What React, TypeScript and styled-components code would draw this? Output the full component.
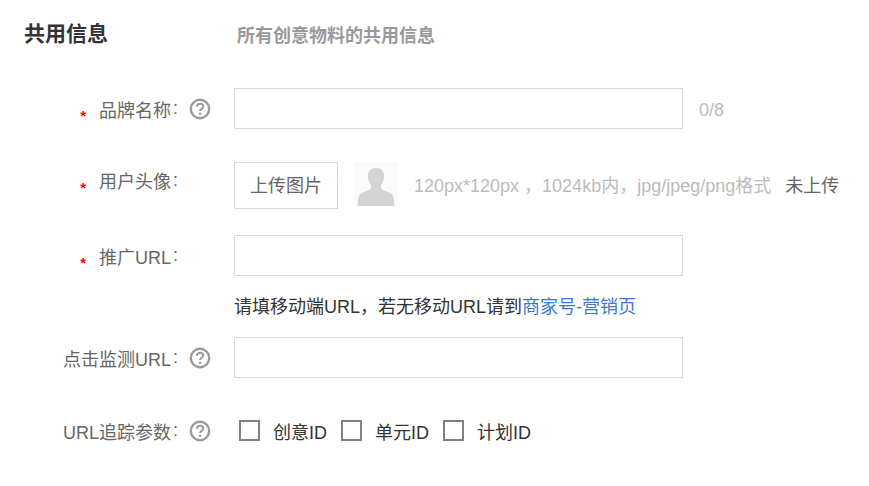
import * as React from 'react';
import styled, { createGlobalStyle } from 'styled-components';

const GlobalStyle = createGlobalStyle`
  html, body {
    margin: 0;
    padding: 0;
    background: #fff;
    font-family: "Liberation Sans", "Noto Sans CJK SC", sans-serif;
  }
`;

const Page = styled.div`
  width: 869px;
  height: 486px;
  overflow: hidden;
  box-sizing: border-box;
  padding-top: 20px;
`;

const Header = styled.div`
  display: flex;
  align-items: center;
  height: 28px;
  padding-left: 24px;
  margin-bottom: 40px;
`;

const Title = styled.h2`
  width: 213px;
  margin: 0;
  font-size: 21px;
  line-height: 28px;
  font-weight: 700;
  color: #333;
`;

const SubTitle = styled.span`
  font-size: 18px;
  font-weight: 700;
  color: #999;
`;

const Row = styled.div<{ $height: number; $gap: number }>`
  display: flex;
  align-items: center;
  height: ${(p) => p.$height}px;
  margin-bottom: ${(p) => p.$gap}px;
`;

const LabelCell = styled.div<{ $top?: boolean }>`
  display: flex;
  align-items: center;
  justify-content: flex-end;
  width: 178px;
  flex: none;
  font-size: 18px;
  color: #666;
  white-space: nowrap;
  ${(p) => (p.$top ? 'align-self: flex-start; margin-top: 5px;' : '')}
`;

const Colon = styled.span`
  margin-left: 2px;
`;

const Star = styled.i`
  font-style: normal;
  font-size: 15px;
  font-weight: 700;
  color: #f00;
  margin-right: 13px;
  position: relative;
  top: 7px;
`;

const HelpSlot = styled.div`
  width: 56px;
  flex: none;
  display: flex;
  align-items: center;
  padding-left: 11px;
  box-sizing: border-box;
`;

const Input = styled.input`
  width: 449px;
  height: 41px;
  box-sizing: border-box;
  border: 1px solid #d9d9d9;
  background: #fff;
  outline: none;
  padding: 0 10px;
  flex: none;
`;

const Counter = styled.span`
  margin-left: 16px;
  margin-top: 3px;
  font-size: 18px;
  color: #bbb;
`;

const UploadButton = styled.button`
  width: 104px;
  height: 47px;
  box-sizing: border-box;
  border: 1px solid #d9d9d9;
  background: #fff;
  font-family: inherit;
  font-size: 18px;
  color: #666;
  padding: 0 0 4px;
  flex: none;
`;

const Avatar = styled.div`
  width: 44px;
  height: 44px;
  margin-left: 16px;
  background: #fafafa;
  flex: none;
  align-self: flex-start;
`;

const Hint = styled.span`
  margin-left: 16px;
  margin-bottom: 4px;
  font-size: 18px;
  color: #bbb;
  white-space: pre;
`;

const Status = styled.span`
  margin-left: 14px;
  margin-bottom: 4px;
  font-size: 18px;
  color: #666;
`;

const HelperLine = styled.div`
  margin-left: 234px;
  height: 24px;
  line-height: 24px;
  margin-bottom: 18px;
  font-size: 18px;
  color: #333;
`;

const Link = styled.a`
  color: #3a78d0;
  text-decoration: none;
`;

const CheckGroup = styled.div`
  display: flex;
  align-items: center;
  padding-left: 5px;
`;

const CheckItem = styled.label`
  display: flex;
  align-items: center;
  font-size: 18px;
  color: #333;
  margin-right: 14px;
`;

const Box = styled.span`
  display: block;
  width: 21px;
  height: 21px;
  box-sizing: border-box;
  border: 2px solid #808080;
  background: #fff;
  margin-right: 13px;
`;

const HelpIcon = () => (
  <svg width="22" height="22" viewBox="0 0 22 22">
    <circle cx="11" cy="11" r="9.2" fill="none" stroke="#9a9a9a" strokeWidth="2.4" />
    <path d="M7.9 8.700c0-1.900 1.400-3 3.200-3 1.800 0 3.100 1.100 3.100 2.700 0 2.400-3.100 2.500-3.100 4.700" fill="none" stroke="#9a9a9a" strokeWidth="2" />
    <circle cx="11.100" cy="15.800" r="1.300" fill="#9a9a9a" />
  </svg>
);

const AvatarIcon = () => (
  <svg width="44" height="44" viewBox="0 0 44 44">
    <path
      d="M22 6c5 0 8 3 8 7.500 0 1 .5 1.500.2 3-.2 1-.8 1.200-1 2-.5 2-1.200 3.500-2.200 4.800v3.200c1 1.500 4 2.500 7 3.500 4.500 1.300 6 3.500 6.500 14H3.500c.5-10.500 2-12.700 6.500-14 3-1 6-2 7-3.500v-3.200c-1-1.300-1.700-2.800-2.200-4.800-.2-.8-.8-1-1-2-.3-1.500.2-2 .2-3C14 9 17 6 22 6z"
      fill="#d4d4d4"
    />
  </svg>
);

const App = () => (
  <Page>
    <GlobalStyle />
    <Header>
      <Title>共用信息</Title>
      <SubTitle>所有创意物料的共用信息</SubTitle>
    </Header>

    <Row $height={41} $gap={33}>
      <LabelCell><Star>*</Star>品牌名称<Colon>:</Colon></LabelCell>
      <HelpSlot><HelpIcon /></HelpSlot>
      <Input />
      <Counter>0/8</Counter>
    </Row>

    <Row $height={47} $gap={26}>
      <LabelCell $top><Star>*</Star>用户头像<Colon>:</Colon></LabelCell>
      <HelpSlot />
      <UploadButton>上传图片</UploadButton>
      <Avatar><AvatarIcon /></Avatar>
      <Hint>{'120px*120px \uFF0C1024kb内\uFF0Cjpg/jpeg/png格式'}</Hint>
      <Status>未上传</Status>
    </Row>

    <Row $height={41} $gap={19}>
      <LabelCell><Star>*</Star>推广URL<Colon>:</Colon></LabelCell>
      <HelpSlot />
      <Input />
    </Row>

    <HelperLine>{'请填移动端URL\uFF0C若无移动URL请到'}<Link href="#">商家号-营销页</Link></HelperLine>

    <Row $height={41} $gap={32}>
      <LabelCell>点击监测URL<Colon>:</Colon></LabelCell>
      <HelpSlot><HelpIcon /></HelpSlot>
      <Input />
    </Row>

    <Row $height={41} $gap={0}>
      <LabelCell>URL追踪参数<Colon>:</Colon></LabelCell>
      <HelpSlot><HelpIcon /></HelpSlot>
      <CheckGroup>
        <CheckItem><Box />创意ID</CheckItem>
        <CheckItem><Box />单元ID</CheckItem>
        <CheckItem><Box />计划ID</CheckItem>
      </CheckGroup>
    </Row>
  </Page>
);

export default App;
